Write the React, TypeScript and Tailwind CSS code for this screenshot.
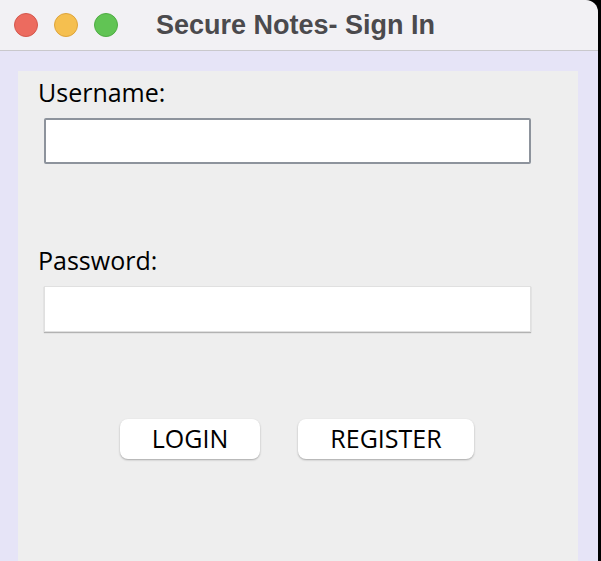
import React from "react";

const labelFont = { fontFamily: '"Open Sans", "DejaVu Sans", sans-serif' };

export default function App() {
  return (
    <div className="w-[601px] h-[561px] bg-black overflow-hidden flex flex-col">
      {/* Title bar */}
      <div className="h-[51px] w-[598px] shrink-0 bg-[#f2f1f4] rounded-tr-[12px] border-b border-[#c9c8cc] flex items-center pl-[14px]">
        <div className="flex gap-[16px]">
          <span className="w-[24px] h-[24px] rounded-full bg-[#ec6b5f] border border-[#d4574c]" />
          <span className="w-[24px] h-[24px] rounded-full bg-[#f5bf4f] border border-[#dea43a]" />
          <span className="w-[24px] h-[24px] rounded-full bg-[#61c454] border border-[#4fac43]" />
        </div>
        <div
          className="ml-[38px] text-[27px] font-bold text-[#4b4a4d] leading-none"
          style={{ fontFamily: '"Liberation Sans", Arial, sans-serif' }}
        >
          Secure Notes- Sign In
        </div>
      </div>

      {/* Window body */}
      <div className="flex-1 w-[598px] bg-[#e6e4f7] pl-[18px] pr-[20px] pt-[20px] flex">
        <div className="flex-1 bg-[#eeeeee] flex flex-col pt-[4px]" style={labelFont}>
          <div className="ml-[20px] text-[25px] leading-[34px] text-black">Username:</div>
          <div className="ml-[26px] mt-[9px] w-[487px] h-[46px] bg-white border-2 border-[#8d939c] rounded-[2px]" />

          <div className="ml-[20px] mt-[79px] text-[25px] leading-[34px] text-black">Password:</div>
          <div className="ml-[26px] mt-[9px] w-[487px] h-[46px] bg-white border border-[#e0e0e0] shadow-[0_1px_1px_rgba(0,0,0,0.25)]" />

          <div className="mt-[87px] flex">
            <button className="ml-[102px] w-[140px] h-[40px] bg-white rounded-[8px] shadow-[0_1px_2px_rgba(0,0,0,0.3)] text-[25px] text-black flex items-center justify-center">
              LOGIN
            </button>
            <button className="ml-[38px] w-[176px] h-[40px] bg-white rounded-[8px] shadow-[0_1px_2px_rgba(0,0,0,0.3)] text-[25px] text-black flex items-center justify-center">
              REGISTER
            </button>
          </div>
        </div>
      </div>
    </div>
  );
}
